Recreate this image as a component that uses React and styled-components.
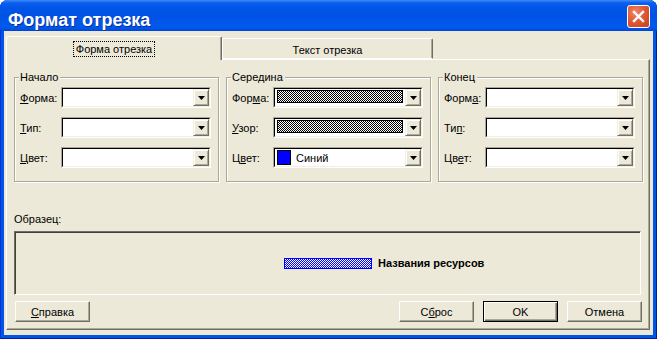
import React from 'react'
import styled, { createGlobalStyle } from 'styled-components'

const GlobalStyle = createGlobalStyle`
  html, body { margin: 0; padding: 0; background: #fff; }
  body {
    font-family: "Liberation Sans", Arial, sans-serif;
    font-size: 11px;
    color: #000;
  }
  #root { width: 657px; height: 339px; }
`

const checker = (a, b) => `repeating-conic-gradient(${a} 0 25%, ${b} 0 50%) 0 0 / 2px 2px`

const Frame = styled.div`
  width: 657px;
  height: 339px;
  box-sizing: border-box;
  display: flex;
  flex-direction: column;
  background: #0055E5;
  border-radius: 8px 8px 0 0;
  box-shadow: inset 1px 0 #0831D9, inset -1px 0 #001EA0, inset 0 -1px #001EA0;
  overflow: hidden;
`
const TitleBar = styled.div`
  height: 31px;
  flex: none;
  display: flex;
  align-items: flex-start;
  justify-content: space-between;
  padding: 0 7px 0 8px;
  box-sizing: border-box;
  background: linear-gradient(to bottom, #3C8CF8 0px, #0A5DEE 3px, #0055E8 8px, #0052E4 16px, #005AEE 26px, #0053E6 29px, #0043D3 31px);
`
const Title = styled.div`
  margin-top: 11px;
  font-size: 18px;
  line-height: 18px;
  font-weight: bold;
  color: #fff;
  text-shadow: 1px 1px 0 #0A2D9C;
`
const CloseButton = styled.div`
  margin-top: 5px;
  width: 23px;
  height: 23px;
  box-sizing: border-box;
  border: 1px solid #fff;
  border-radius: 3px;
  background: radial-gradient(circle at 35% 30%, #F08A6C 0%, #E05A38 45%, #C8401C 100%);
  display: flex;
  align-items: center;
  justify-content: center;
`
const Body = styled.div`
  flex: 1;
  margin: 0 4px 4px;
  background: #ECE9D8;
  padding: 5px 3px 5px 2px;
  display: flex;
  flex-direction: column;
`
const TabStrip = styled.div`
  height: 23px;
  flex: none;
  display: flex;
  align-items: flex-end;
  position: relative;
  z-index: 1;
`
const Tab = styled.div`
  width: ${p => p.$w}px;
  height: ${p => (p.$active ? 24 : 21)}px;
  margin-bottom: ${p => (p.$active ? -1 : 0)}px;
  box-sizing: border-box;
  border: 1px solid;
  border-color: #fff #716F64 ${p => (p.$active ? '#ECE9D8' : '#fff')} #fff;
  border-bottom-width: ${p => (p.$active ? 0 : 1)}px;
  border-radius: 2px 2px 0 0;
  box-shadow: inset -1px 0 #ACA899;
  background: #ECE9D8;
  display: flex;
  align-items: center;
  justify-content: center;
  padding-top: ${p => (p.$active ? 0 : 2)}px;
`
const TabLabel = styled.span`
  line-height: 14px;
  padding: 0 2px;
  border: 1px dotted ${p => (p.$focus ? '#000' : 'transparent')};
`
const Page = styled.div`
  flex: 1;
  border: 1px solid;
  border-color: #fff #716F64 #716F64 #fff;
  box-shadow: inset -1px -1px #ACA899;
  padding: 11px 6px 6px 7px;
  display: flex;
  flex-direction: column;
`
const Groups = styled.div`
  display: grid;
  grid-template-columns: repeat(3, 205px);
  column-gap: 7px;
`
const Group = styled.fieldset`
  margin: 0;
  min-width: 0;
  padding: 3px 8px 13px 5px;
  border: 1px solid #ACA899;
  box-shadow: inset 1px 1px #fff, 1px 1px #fff;
`
const Legend = styled.legend`
  padding: 0 2px 0 1px;
  margin-left: -1px;
  line-height: 13px;
  background: #ECE9D8;
`
const Rows = styled.div`
  display: flex;
  flex-direction: column;
  gap: 9px;
`
const Row = styled.div`
  display: grid;
  grid-template-columns: 41px 150px;
  align-items: center;
  height: 21px;
`
const Combo = styled.div`
  height: 21px;
  box-sizing: border-box;
  border: 1px solid;
  border-color: #ACA899 #fff #fff #ACA899;
  display: flex;
`
const ComboInner = styled.div`
  flex: 1;
  display: flex;
  background: #fff;
  border: 1px solid;
  border-color: #000 #F1EFE2 #F1EFE2 #000;
`
const ComboValue = styled.div`
  flex: 1;
  display: flex;
  align-items: ${p => (p.$top ? 'flex-start' : 'center')};
  min-width: 0;
`
const DropButton = styled.div`
  width: 16px;
  box-sizing: border-box;
  border: 1px solid;
  border-color: #F1EFE2 #716F64 #716F64 #F1EFE2;
  box-shadow: inset 1px 1px #fff, inset -1px -1px #ACA899;
  background: #ECE9D8;
  display: flex;
  align-items: center;
  justify-content: center;
`
const PatternSwatch = styled.div`
  flex: 1;
  height: 13px;
  margin: 1px 2px 0 2px;
  box-sizing: border-box;
  border: 1px solid #000;
  background: ${checker('#000', '#fff')};
`
const ColorSwatch = styled.div`
  width: 14px;
  height: 15px;
  margin: 0 5px 0 2px;
  box-sizing: border-box;
  border: 1px solid #000;
  background: ${p => p.$color};
`
const Caption = styled.div`
  margin-top: 31px;
  line-height: 13px;
`
const SampleBox = styled.div`
  margin: 5px 2px 0 0;
  height: 64px;
  box-sizing: border-box;
  border: 1px solid;
  border-color: #716F64 #fff #fff #716F64;
  box-shadow: inset 1px 1px #404040;
  display: flex;
  align-items: center;
  padding-left: 269px;
`
const SampleBar = styled.div`
  width: 88px;
  height: 11px;
  box-sizing: border-box;
  border: 1px solid #0000FF;
  background: ${checker('#0000FF', '#fff')};
`
const SampleText = styled.span`
  margin-left: 6px;
  font-weight: bold;
`
const ButtonRow = styled.div`
  margin: 6px 1px 0 1px;
  display: flex;
  gap: 9px;
`
const Button = styled.div`
  width: 75px;
  height: 21px;
  box-sizing: border-box;
  display: flex;
  align-items: center;
  justify-content: center;
  border: 1px solid;
  border-color: ${p => (p.$default ? '#000' : '#fff #716F64 #716F64 #fff')};
  box-shadow: ${p =>
    p.$default
      ? 'inset 1px 1px #fff, inset -1px -1px #716F64, inset -2px -2px #ACA899'
      : 'inset -1px -1px #ACA899'};
  background: #ECE9D8;
  margin-left: ${p => (p.$push ? 'auto' : '0')};
  margin-right: ${p => p.$mr || 0}px;
`

const Arrow = () => (
  <svg width="7" height="4" viewBox="0 0 7 4">
    <polygon points="0,0 7,0 3.5,4" fill="#000" />
  </svg>
)

const Field = ({ label, children, top }) => (
  <Row>
    <span>{label}</span>
    <Combo>
      <ComboInner>
        <ComboValue $top={top}>{children}</ComboValue>
        <DropButton>
          <Arrow />
        </DropButton>
      </ComboInner>
    </Combo>
  </Row>
)

const u = (before, letter, after) => (
  <>
    {before}
    <u>{letter}</u>
    {after}
  </>
)

const groups = [
  {
    title: 'Начало',
    fields: [
      { label: u('', 'Ф', 'орма:') },
      { label: u('', 'Т', 'ип:') },
      { label: u('', 'Ц', 'вет:') },
    ],
  },
  {
    title: 'Середина',
    fields: [
      { label: u('Фор', 'м', 'а:'), pattern: true },
      { label: u('', 'У', 'зор:'), pattern: true },
      { label: u('Ц', 'в', 'ет:'), color: '#0000FF', text: 'Синий' },
    ],
  },
  {
    title: 'Конец',
    fields: [
      { label: u('Форм', 'а', ':') },
      { label: u('Ти', 'п', ':') },
      { label: u('Цв', 'е', 'т:') },
    ],
  },
]

export default function App() {
  return (
    <>
      <GlobalStyle />
      <Frame>
        <TitleBar>
          <Title>Формат отрезка</Title>
          <CloseButton>
            <svg width="13" height="13" viewBox="0 0 13 13">
              <path d="M2 2 L11 11 M11 2 L2 11" stroke="#fff" strokeWidth="2.4" strokeLinecap="square" />
            </svg>
          </CloseButton>
        </TitleBar>
        <Body>
          <TabStrip>
            <Tab $active $w={216}>
              <TabLabel $focus>Форма отрезка</TabLabel>
            </Tab>
            <Tab $w={211}>
              <TabLabel>Текст отрезка</TabLabel>
            </Tab>
          </TabStrip>
          <Page>
            <Groups>
              {groups.map(g => (
                <Group key={g.title}>
                  <Legend>{g.title}</Legend>
                  <Rows>
                    {g.fields.map((f, i) => (
                      <Field key={i} label={f.label} top={f.pattern}>
                        {f.pattern && <PatternSwatch />}
                        {f.color && <ColorSwatch $color={f.color} />}
                        {f.text}
                      </Field>
                    ))}
                  </Rows>
                </Group>
              ))}
            </Groups>
            <Caption>Образец:</Caption>
            <SampleBox>
              <SampleBar />
              <SampleText>Названия ресурсов</SampleText>
            </SampleBox>
            <ButtonRow>
              <Button>{u('', 'С', 'правка')}</Button>
              <Button $push>{u('С', 'б', 'рос')}</Button>
              <Button $default>OK</Button>
              <Button>Отмена</Button>
            </ButtonRow>
          </Page>
        </Body>
      </Frame>
    </>
  )
}
